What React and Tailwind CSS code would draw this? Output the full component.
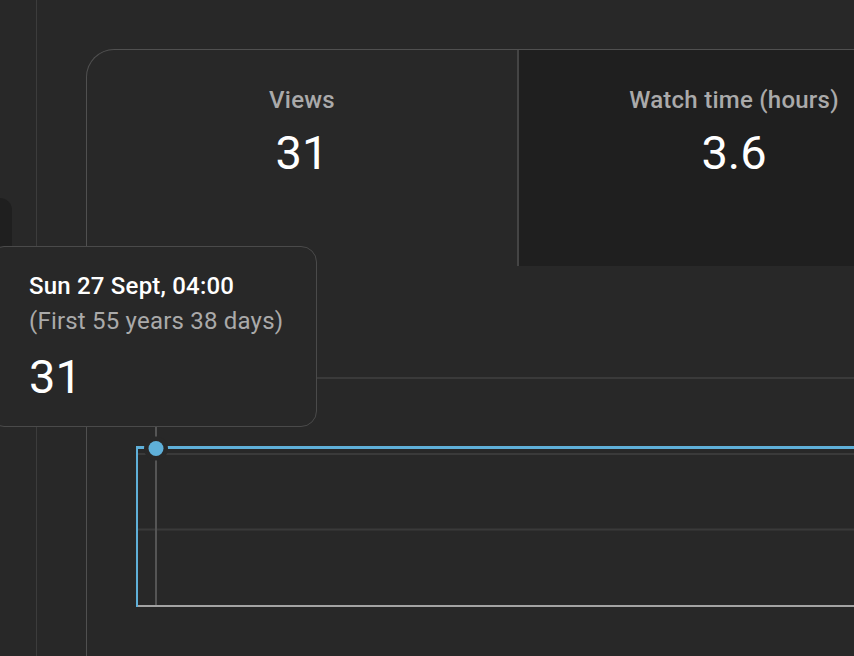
import React from 'react'

const FONT = { fontFamily: 'Roboto, "Noto Sans", Arial, sans-serif' }

// chart drawing, origin at page (134, 420)
const Chart = () => {
    return (
        <svg width="720" height="192" viewBox="0 0 720 192" className="block">
            {/* grid */}
            <line x1="3" y1="34" x2="720" y2="34" stroke="#3a3a3a" strokeWidth="2" />
            <line x1="3" y1="109.5" x2="720" y2="109.5" stroke="#3a3a3a" strokeWidth="2" />
            {/* hover cursor */}
            <line x1="22" y1="0" x2="22" y2="186" stroke="#555555" strokeWidth="2" />
            {/* axis */}
            <line x1="2" y1="186" x2="720" y2="186" stroke="#a3a3a3" strokeWidth="2" />
            {/* data */}
            <line x1="3" y1="26" x2="3" y2="187" stroke="#5fb0d9" strokeWidth="2" />
            <line x1="2" y1="27.5" x2="720" y2="27.5" stroke="#5fb0d9" strokeWidth="3" />
            <circle cx="22" cy="28.5" r="7.5" fill="#5fb0d9" stroke="#282828" strokeWidth="9" paintOrder="stroke" />
        </svg>
    )
}

const Tab = ({ label, value, dark }) => {
    return (
        <div className={`flex w-[430px] shrink-0 flex-col items-center pt-[36px] ${dark ? "bg-[#1f1f1f]" : ""}`}>
            <p className="text-[24px] leading-[28px] font-medium tracking-[0.25px] text-[#aaaaaa]">{label}</p>
            <p className="mt-[16px] text-[47px] leading-[46px] text-white">{value}</p>
        </div>
    )
}

const App = () => {
    return (
        <div className="relative flex h-[656px] w-[854px] overflow-hidden bg-[#282828]" style={FONT}>
            {/* left rail */}
            <div className="w-[36px] shrink-0">
                <div className="mt-[198px] h-[220px] w-[12px] rounded-tr-[12px] bg-[#1f1f1f]"></div>
            </div>
            <div className="w-px shrink-0 bg-[#3c3c3c]"></div>

            <div className="flex-1 pl-[49px] pt-[49px]">
                <div className="h-full w-[900px] rounded-tl-[28px] border-l border-t border-[#505050]">
                    <div className="flex h-[216px]">
                        <Tab label="Views" value="31" />
                        <div className="w-[2px] shrink-0 bg-[#444444]"></div>
                        <Tab label="Watch time (hours)" value="3.6" dark />
                    </div>
                    <div className="mt-[111px] h-[2px] bg-[#3a3a3a]"></div>
                    <div className="ml-[47px] mt-[41px]">
                        <Chart />
                    </div>
                </div>
            </div>

            {/* tooltip */}
            <div className="absolute left-[-12px] top-[246px] h-[181px] w-[329px] rounded-[16px] border border-[#4a4a4a] bg-[#282828] pl-[40px] pt-[25px]">
                <p className="text-[24px] leading-[28px] font-medium tracking-[0.2px] text-white">Sun 27 Sept, 04:00</p>
                <p className="mt-[7px] text-[24px] leading-[28px] tracking-[0.2px] text-[#aaaaaa]">(First 55 years 38 days)</p>
                <p className="mt-[18px] text-[47px] leading-[48px] text-white">31</p>
            </div>
        </div>
    )
}

export default App
